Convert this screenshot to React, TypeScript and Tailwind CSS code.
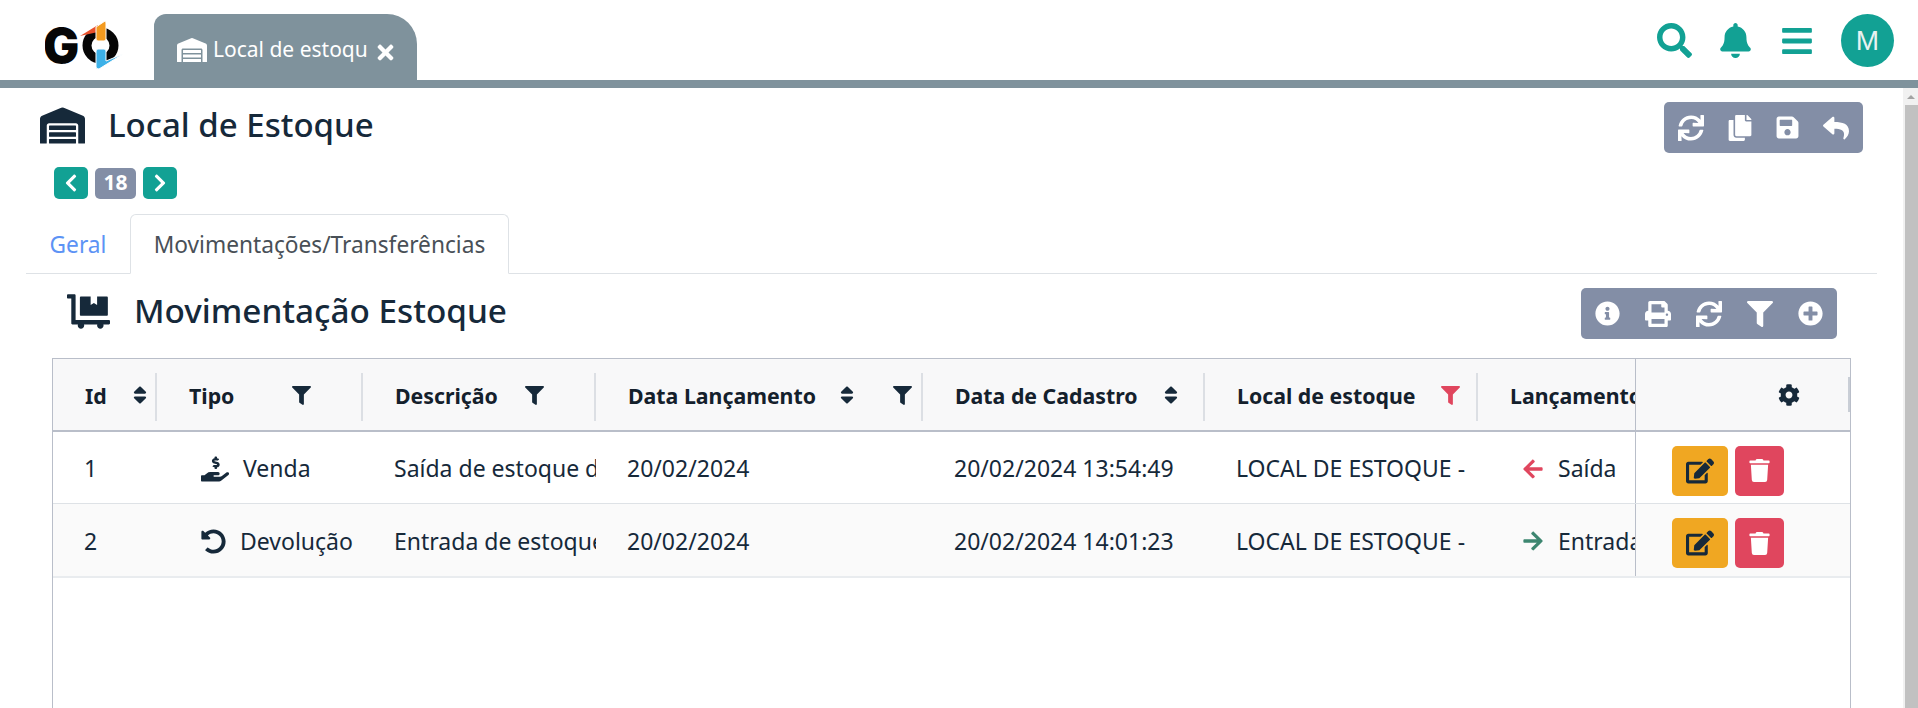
import type { ReactNode } from "react";
import {
  FaArrowLeft,
  FaArrowRight,
  FaBars,
  FaBell,
  FaChevronLeft,
  FaChevronRight,
  FaCog,
  FaCopy,
  FaDollyFlatbed,
  FaEdit,
  FaFilter,
  FaHandHoldingUsd,
  FaInfoCircle,
  FaPlusCircle,
  FaPrint,
  FaReply,
  FaSave,
  FaSearch,
  FaSort,
  FaSync,
  FaTimes,
  FaTrash,
  FaUndoAlt,
  FaWarehouse,
} from "react-icons/fa";

const COLS = "grid-cols-[104px_206px_233px_327px_282px_273px_157px_1fr]";

function Logo() {
  return (
    <svg width="80" height="50" viewBox="0 0 80 50" className="shrink-0">
      <text x="-2" y="43" fontFamily="Inter, sans-serif" fontWeight="900" fontSize="48" fill="#060606">
        G
      </text>
      <circle cx="55.5" cy="25.5" r="13.5" fill="none" stroke="#060606" strokeWidth="9" />
      <path d="M35 16 L53 5 L53 12 Z" fill="#e8502b" />
      <path
        d="M51 7 L60 1 Q61 1 61 3 L61 19 Q61 21 59 21 L53 21 Q51 21 51 19 Z"
        fill="#f39a1f"
        stroke="#ffffff"
        strokeWidth="1"
      />
      <path
        d="M51 31 Q51 29 53 29 L59 29 Q61 29 61 31 L61 41 L78 34 L54 49 Q51 49 51 47 Z"
        fill="#3db1e8"
        stroke="#ffffff"
        strokeWidth="1"
      />
    </svg>
  );
}

function ToolGroup({ children, className }: { children: ReactNode; className: string }) {
  return (
    <div className={`flex h-[51px] items-center justify-between rounded-[5px] bg-[#838ea6] text-white ${className}`}>
      {children}
    </div>
  );
}

function Head({
  label,
  sortX,
  filterX,
  filterRed,
  last,
}: {
  label: string;
  sortX?: string;
  filterX?: string;
  filterRed?: boolean;
  last?: boolean;
}) {
  return (
    <div className="relative flex h-full items-center overflow-hidden pt-[2px] pl-[32px] text-[21.3px] font-bold text-[#14202c]">
      <span className="whitespace-nowrap">{label}</span>
      {sortX && <FaSort className={`absolute top-[25px] size-[22px] text-[#16293a] ${sortX}`} />}
      {filterX && (
        <FaFilter
          className={`absolute top-[27px] size-[19px] ${filterX} ${filterRed ? "text-[#e0465e]" : "text-[#16293a]"}`}
        />
      )}
      {!last && <span className="absolute top-[14px] right-0 h-[48px] w-[2px] bg-[#dcdfe4]" />}
    </div>
  );
}

function Cell({ children }: { children: ReactNode }) {
  return <div className="flex h-full items-center overflow-hidden pt-[2px] pl-[31px] whitespace-nowrap">{children}</div>;
}

function Row({
  id,
  icon,
  tipo,
  desc,
  cadastro,
  arrow,
  lanc,
  className,
}: {
  id: string;
  icon: ReactNode;
  tipo: string;
  desc: string;
  cadastro: string;
  arrow: ReactNode;
  lanc: string;
  className: string;
}) {
  return (
    <div className={`grid ${COLS} text-[23px] text-[#16293a] ${className}`}>
      <Cell>{id}</Cell>
      <Cell>
        <span className="ml-[13px] flex items-center">
          {icon}
          <span className="ml-[14px]">{tipo}</span>
        </span>
      </Cell>
      <Cell>{desc}</Cell>
      <Cell>20/02/2024</Cell>
      <Cell>{cadastro}</Cell>
      <Cell>LOCAL DE ESTOQUE -</Cell>
      <Cell>
        <span className="ml-[13px] flex items-center">
          {arrow}
          <span className="ml-[14px]">{lanc}</span>
        </span>
      </Cell>
      <div className="flex h-full items-center gap-[7px] border-l border-[#b9bec9] pt-[6px] pl-[36px]">
        <button className="flex h-[50px] w-[56px] items-center justify-center rounded-[5px] bg-[#f0a722] text-[#16293a]">
          <FaEdit className="size-[28px]" />
        </button>
        <button className="flex h-[50px] w-[49px] items-center justify-center rounded-[5px] bg-[#e0465e] text-white">
          <FaTrash className="size-[23px]" />
        </button>
      </div>
    </div>
  );
}

export default function App() {
  return (
    <div className="flex h-[708px] flex-col overflow-hidden bg-white font-['Noto_Sans',sans-serif] text-[#16293a]">
      {/* barra superior */}
      <header className="flex h-[88px] shrink-0 items-end border-b-[8px] border-[#7f929c] bg-white">
        <div className="mb-[10px] ml-[45px] w-[109px]">
          <Logo />
        </div>
        <div className="relative flex h-[66px] w-[263px] items-center rounded-tl-[12px] rounded-tr-[30px] bg-[#7f929c] pt-[5px] pl-[23px] text-white">
          <FaWarehouse className="size-[30px] shrink-0" />
          <span className="ml-[6px] w-[155px] overflow-hidden text-[21px] whitespace-nowrap">Local de estoque</span>
          <FaTimes className="absolute top-[27px] left-[220px] size-[23px]" />
        </div>
        <div className="mb-[13px] ml-auto flex items-center pr-[24px] text-[#12a194]">
          <FaSearch className="size-[35px]" />
          <FaBell className="ml-[26px] size-[35px]" />
          <FaBars className="ml-[27px] size-[34px]" />
          <div className="ml-[27px] flex size-[53px] items-center justify-center rounded-full bg-[#12a194] font-['Liberation_Sans',sans-serif] text-[28px] text-[#e8f2f1]">
            M
          </div>
        </div>
      </header>

      <div className="flex min-h-0 flex-1">
        <main className="min-w-0 flex-1 pt-[14px]">
          {/* titulo */}
          <div className="flex h-[51px] items-start justify-between pr-[40px]">
            <div className="flex items-center pl-[40px]">
              <FaWarehouse className="size-[45px]" />
              <h1 className="ml-[23px] pb-[2px] text-[33px] leading-[45px] font-medium">Local de Estoque</h1>
            </div>
            <ToolGroup className="w-[199px] px-[14px]">
              <FaSync className="size-[26px]" />
              <FaCopy className="size-[26px]" />
              <FaSave className="size-[25px]" />
              <FaReply className="size-[26px]" />
            </ToolGroup>
          </div>

          {/* paginacao */}
          <div className="mt-[14px] ml-[54px] flex h-[32px] items-center gap-[7px] text-white">
            <button className="flex h-[32px] w-[34px] items-center justify-center rounded-[5px] bg-[#12a194]">
              <FaChevronLeft className="size-[20px]" />
            </button>
            <span className="flex h-[31px] w-[41px] items-center justify-center rounded-[5px] bg-[#838ea6] text-[21px] font-bold">
              18
            </span>
            <button className="flex h-[32px] w-[34px] items-center justify-center rounded-[5px] bg-[#12a194]">
              <FaChevronRight className="size-[20px]" />
            </button>
          </div>

          {/* abas */}
          <div className="mt-[15px] mr-[26px] ml-[26px] flex h-[60px] items-end border-b border-[#dee2e6] text-[22.7px]">
            <a className="flex h-[59px] w-[104px] items-center justify-center pt-[3px] text-[#5c93f5]">Geral</a>
            <a className="-mb-px flex h-[60px] w-[379px] items-center justify-center rounded-t-[6px] border border-b-white border-[#dee2e6] bg-white pt-[3px] text-[#495057]">
              Movimentações/Transferências
            </a>
          </div>

          {/* secao */}
          <div className="mt-[14px] flex h-[51px] items-start justify-between pr-[66px] pl-[67px]">
            <div className="flex items-start">
              <FaDollyFlatbed className="mt-[2px] size-[43px]" />
              <h2 className="ml-[24px] text-[33.3px] leading-[44px] font-medium">Movimentação Estoque</h2>
            </div>
            <ToolGroup className="w-[256px] px-[14px]">
              <FaInfoCircle className="size-[25px]" />
              <FaPrint className="size-[26px]" />
              <FaSync className="size-[26px]" />
              <FaFilter className="size-[26px]" />
              <FaPlusCircle className="size-[25px]" />
            </ToolGroup>
          </div>

          {/* tabela */}
          <div className="mt-[19px] mr-[52px] ml-[52px] h-[400px] border border-[#b9bec9]">
            <div className={`grid h-[73px] ${COLS} border-b-2 border-[#b9bec9] bg-[#f8f8f9]`}>
              <Head label="Id" sortX="left-[76px]" />
              <Head label="Tipo" filterX="left-[135px]" />
              <Head label="Descrição" filterX="left-[162px]" />
              <Head label="Data Lançamento" sortX="left-[240px]" filterX="left-[297px]" />
              <Head label="Data de Cadastro" sortX="left-[237px]" />
              <Head label="Local de estoque" filterX="left-[236px]" filterRed />
              <Head label="Lançamento" last />
              <div className="relative flex h-full items-center border-l border-[#b9bec9] pl-[142px]">
                <FaCog className="size-[22px] text-[#16293a]" />
                <span className="absolute top-[18px] right-0 h-[35px] w-[2px] bg-[#c9ced6]" />
              </div>
            </div>
            <Row
              id="1"
              icon={<FaHandHoldingUsd className="size-[28px]" />}
              tipo="Venda"
              desc="Saída de estoque de produto"
              cadastro="20/02/2024 13:54:49"
              arrow={<FaArrowLeft className="size-[22px] text-[#e0465e]" />}
              lanc="Saída"
              className="h-[72px] border-b border-[#dee2e6] bg-white"
            />
            <Row
              id="2"
              icon={<FaUndoAlt className="size-[25px]" />}
              tipo="Devolução"
              desc="Entrada de estoque de produto"
              cadastro="20/02/2024 14:01:23"
              arrow={<FaArrowRight className="size-[22px] text-[#3d8670]" />}
              lanc="Entrada"
              className="h-[74px] border-b-2 border-[#e9ecef] bg-[#fafafa]"
            />
          </div>
        </main>

        {/* barra de rolagem */}
        <div className="flex w-[15px] shrink-0 flex-col bg-[#f1f1f1]">
          <div className="flex h-[17px] items-center justify-center">
            <span className="size-0 border-x-[4px] border-b-[4px] border-x-transparent border-b-[#a3a3a3]" />
          </div>
          <div className="ml-[2px] flex-1 bg-[#c1c1c1]" />
        </div>
      </div>
    </div>
  );
}
